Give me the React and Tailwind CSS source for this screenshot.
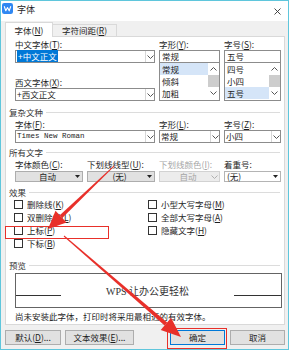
import React from "react";

function Chevron({ color = "#555" }) {
  return (
    <svg width="7" height="4" viewBox="0 0 7 4">
      <polyline points="0.5,0.5 3.5,3.5 6.5,0.5" fill="none" stroke={color} strokeWidth="1" />
    </svg>
  );
}

function ChevronUp() {
  return (
    <svg width="7" height="4" viewBox="0 0 7 4">
      <polyline points="0.5,3.5 3.5,0.5 6.5,3.5" fill="none" stroke="#555" strokeWidth="1" />
    </svg>
  );
}

function Caret() {
  return (
    <svg width="5" height="3" viewBox="0 0 5 3">
      <polygon points="0,0 5,0 2.5,3" fill="#222" />
    </svg>
  );
}

function Label({ text, k, after = ":", muted }) {
  return (
    <div className={`h-[11px] flex items-center leading-none ${muted ? "text-[#a6a6a6]" : "text-[#1e1e1e]"}`}>
      {text}
      {k && (
        <>
          (<span className="underline">{k}</span>)
        </>
      )}
      {after}
    </div>
  );
}

function Section({ title }) {
  return (
    <div className="h-[12px] flex items-center">
      <span className="leading-none text-[#333]">{title}</span>
      <div className="flex-1 h-px bg-[#dcdcdc] ml-[3px] mr-[2px]" />
    </div>
  );
}

function Combo({ children, mono }) {
  return (
    <div className="h-[13px] border border-[#8c8c8c] bg-white flex items-center">
      <div className={`flex-1 pl-[1px] leading-none whitespace-nowrap ${mono ? "font-['Liberation_Mono',monospace] text-[7.5px]" : ""}`}>
        {children}
      </div>
      <div className="w-[9px] h-full flex items-center justify-center border-l border-[#d6d6d6]">
        <Chevron />
      </div>
    </div>
  );
}

function ListBox({ items, sel }) {
  return (
    <div className="h-[39px] -mt-px border border-[#8c8c8c] bg-white flex">
      <div className="flex-1 flex flex-col">
        {items.map((t, i) => (
          <div key={t} className={`h-[12px] pl-[2px] flex items-center leading-none ${i === sel ? "bg-[#d5e5f8]" : ""}`}>
            {t}
          </div>
        ))}
      </div>
      <div className="w-[11px] flex flex-col items-center">
        <div className="h-[12px] flex items-center"><ChevronUp /></div>
        <div className="w-[11px] h-[12px] bg-[#cdcdcd]" />
        <div className="h-[12px] flex items-center"><Chevron /></div>
      </div>
    </div>
  );
}

function Select({ children, disabled, white, left }) {
  return (
    <div
      className={`h-[11px] border flex items-center leading-none ${
        disabled
          ? "bg-[#ececec] border-[#d2d2d2] text-[#a6a6a6]"
          : white
          ? "bg-white border-[#b4b4b4]"
          : "bg-[#e1e1e1] border-[#adadad]"
      }`}
    >
      <div className={`flex-1 ${left ? "pl-[2px]" : "text-center pl-[6px]"}`}>{children}</div>
      <div className="w-[9px] flex items-center justify-center">
        {disabled ? <Chevron color="#b0b0b0" /> : <Caret />}
      </div>
    </div>
  );
}

function Check({ text, k }) {
  return (
    <div className="h-[13px] flex items-center">
      <div className="w-[9px] h-[9px] border border-[#333] bg-white" />
      <span className="ml-[4px] leading-none">
        {text}(<span className="underline">{k}</span>)
      </span>
    </div>
  );
}

function Button({ children, w, focus }) {
  return (
    <button
      className={`h-[15px] ${w} flex items-center justify-center leading-none bg-[#e1e1e1] border ${
        focus ? "border-[#0078d7]" : "border-[#adadad]"
      }`}
    >
      {children}
    </button>
  );
}

export default function App() {
  return (
    <div className="relative w-[290px] h-[350px] bg-white overflow-hidden font-['Noto_Sans_CJK_SC',sans-serif] text-[8.5px] text-[#1e1e1e]">
      <div className="w-[289px] h-[350px] border border-[#5fc6dc] bg-[#f0f0f0] flex flex-col">
        {/* title bar */}
        <div className="h-[20px] bg-white flex items-start pt-[2px] pl-[1px]">
          <svg width="11" height="11" viewBox="0 0 11 11">
            <rect x="0" y="0" width="11" height="11" rx="2.2" fill="#2f87f2" />
            <polyline points="2.2,3.2 3.8,7.8 5.5,4.6 7.2,7.8 8.8,3.2" fill="none" stroke="#fff" strokeWidth="1.1" strokeLinejoin="round" />
          </svg>
          <span className="ml-[4px] mt-[1px] text-[9px] leading-[11px]">字体</span>
          <div className="ml-auto mr-[7px] mt-[5px]">
            <svg width="7" height="7" viewBox="0 0 7 7">
              <path d="M0.5 0.5 L6.5 6.5 M6.5 0.5 L0.5 6.5" stroke="#333" strokeWidth="0.9" />
            </svg>
          </div>
        </div>

        {/* body */}
        <div className="flex-1 flex flex-col pl-[4px] pr-[3px]">
          <div className="mt-[1px] h-[15px] flex items-end relative z-10">
            <div className="h-[15px] w-[48px] bg-white border border-b-0 border-[#d9d9d9] flex items-center justify-center leading-none">
              字体(<span className="underline">N</span>)
            </div>
            <div className="h-[12px] w-[64px] mb-[1px] border border-b-0 border-l-0 border-[#d9d9d9] flex items-center justify-center leading-none">
              字符间距(<span className="underline">R</span>)
            </div>
          </div>

          <div className="-mt-px w-[280px] h-[289px] border border-[#d9d9d9] bg-white flex flex-col pl-[3px] pr-[2px]">
            {/* font names */}
            <div className="ml-[6px] mt-[2px] grid grid-cols-[140px_61px_57px] gap-x-[4px]">
              <div className="flex flex-col">
                <Label text="中文字体" k="T" />
                <Combo>
                  <span className="bg-[#0078d7] text-white px-[1px]">+中文正文</span>
                </Combo>
                <div className="h-[14px]" />
                <Label text="西文字体" k="X" />
                <Combo>+西文正文</Combo>
              </div>
              <div className="flex flex-col">
                <Label text="字形" k="Y" />
                <div className="h-[13px] border border-[#8c8c8c] bg-white flex items-center pl-[2px] leading-none">常规</div>
                <ListBox items={["常规", "倾斜", "加粗"]} sel={0} />
              </div>
              <div className="flex flex-col">
                <Label text="字号" k="S" />
                <div className="h-[13px] border border-[#8c8c8c] bg-white flex items-center pl-[2px] leading-none">五号</div>
                <ListBox items={["四号", "小四", "五号"]} sel={2} />
              </div>
            </div>

            {/* complex script */}
            <div className="mt-[5px]"><Section title="复杂文种" /></div>
            <div className="ml-[6px] mt-[1px] grid grid-cols-[140px_61px_57px] gap-x-[4px]">
              <div className="flex flex-col">
                <Label text="字体" k="F" />
                <Combo mono>Times New Roman</Combo>
              </div>
              <div className="flex flex-col">
                <Label text="字形" k="L" />
                <Combo>常规</Combo>
              </div>
              <div className="flex flex-col">
                <Label text="字号" k="Z" />
                <Combo>小四</Combo>
              </div>
            </div>

            {/* all text */}
            <div className="mt-[3px]"><Section title="所有文字" /></div>
            <div className="ml-[6px] mt-[1px] grid grid-cols-[68px_68px_61px_57px] gap-x-[4px]">
              <div className="flex flex-col">
                <div className="h-[12px]"><Label text="字体颜色" k="C" /></div>
                <Select>自动</Select>
              </div>
              <div className="flex flex-col">
                <div className="h-[12px]"><Label text="下划线线型" k="U" /></div>
                <Select>(无)</Select>
              </div>
              <div className="flex flex-col">
                <div className="h-[12px]"><Label text="下划线颜色" k="I" muted /></div>
                <Select disabled>自动</Select>
              </div>
              <div className="flex flex-col">
                <div className="h-[12px]"><Label text="着重号" after=":" /></div>
                <Select white left>(无)</Select>
              </div>
            </div>

            {/* effects */}
            <div className="mt-[4px]"><Section title="效果" /></div>
            <div className="ml-[5px] grid grid-cols-[134px_1fr]">
              <div className="flex flex-col">
                <Check text="删除线" k="K" />
                <Check text="双删除线" k="L" />
                <Check text="上标" k="P" />
                <Check text="下标" k="B" />
              </div>
              <div className="flex flex-col">
                <Check text="小型大写字母" k="M" />
                <Check text="全部大写字母" k="A" />
                <Check text="隐藏文字" k="H" />
              </div>
            </div>

            {/* preview */}
            <div className="mt-[9px]"><Section title="预览" /></div>
            <div className="ml-[6px] mt-[2px] h-[35px] border border-[#646464] bg-white flex">
              <div className="w-[45px] h-px bg-[#333] mt-[21px]" />
              <div className="flex-1" />
              <div className="self-center mt-[1px] text-[10px] leading-none text-[#333]">
                <span className="font-['Liberation_Serif',serif]">WPS</span> 让办公更轻松
              </div>
              <div className="flex-1" />
              <div className="w-[47px] h-px bg-[#333] mt-[21px]" />
            </div>
            <div className="ml-[6px] mt-[2px] h-[12px] flex items-center leading-none">
              尚未安装此字体，打印时将采用最相近的有效字体。
            </div>
          </div>

          {/* buttons */}
          <div className="mt-[5px] flex">
            <Button w="w-[56px]">
              默认(<span className="underline">D</span>)...
            </Button>
            <div className="ml-[4px]">
              <Button w="w-[69px]">
                文本效果(<span className="underline">E</span>)...
              </Button>
            </div>
            <div className="ml-auto">
              <Button w="w-[55px]" focus>确定</Button>
            </div>
            <div className="ml-[5px]">
              <Button w="w-[55px]">取消</Button>
            </div>
          </div>
        </div>
      </div>

      {/* annotations */}
      <div className="absolute left-[5px] top-[226px] w-[104px] h-[13px] border-[1.5px] border-[#e8302a]" />
      <div className="absolute left-[167px] top-[328px] w-[60px] h-[21px] border-[1.5px] border-[#e8302a]" />
      <svg className="absolute left-0 top-0 pointer-events-none" width="290" height="350" viewBox="0 0 290 350">
        <polygon points="114.35,166.36 62.24,217.9 59.76,215.3 113.65,165.64" fill="#e8302a" />
        <polygon points="48,229 66.5,222.4 55.5,210.8" fill="#e8302a" />
        <polygon points="63.67,236.38 164.6,325.4 167.2,322.4 64.33,235.62" fill="#e8302a" />
        <polygon points="181,337 160.7,330 171.1,317.8" fill="#e8302a" />
      </svg>
    </div>
  );
}
